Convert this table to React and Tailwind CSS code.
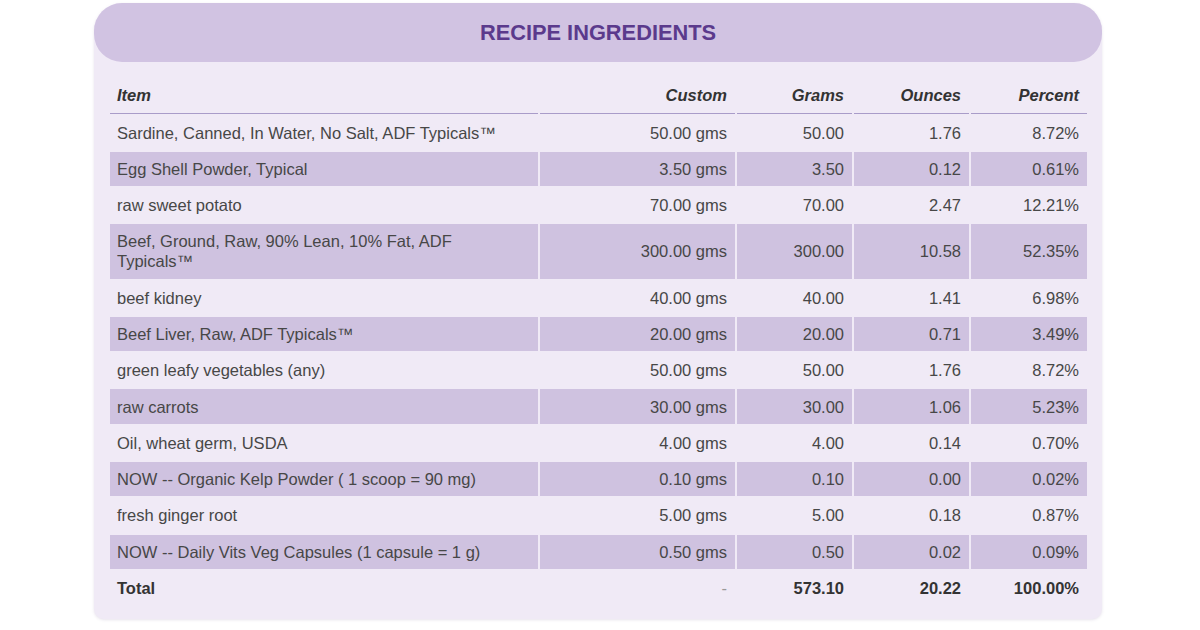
import React from 'react';

const rows = [
    ['Sardine, Canned, In Water, No Salt, ADF Typicals™', '50.00 gms', '50.00', '1.76', '8.72%'],
    ['Egg Shell Powder, Typical', '3.50 gms', '3.50', '0.12', '0.61%'],
    ['raw sweet potato', '70.00 gms', '70.00', '2.47', '12.21%'],
    ['Beef, Ground, Raw, 90% Lean, 10% Fat, ADF Typicals™', '300.00 gms', '300.00', '10.58', '52.35%'],
    ['beef kidney', '40.00 gms', '40.00', '1.41', '6.98%'],
    ['Beef Liver, Raw, ADF Typicals™', '20.00 gms', '20.00', '0.71', '3.49%'],
    ['green leafy vegetables (any)', '50.00 gms', '50.00', '1.76', '8.72%'],
    ['raw carrots', '30.00 gms', '30.00', '1.06', '5.23%'],
    ['Oil, wheat germ, USDA', '4.00 gms', '4.00', '0.14', '0.70%'],
    ['NOW -- Organic Kelp Powder ( 1 scoop = 90 mg)', '0.10 gms', '0.10', '0.00', '0.02%'],
    ['fresh ginger root', '5.00 gms', '5.00', '0.18', '0.87%'],
    ['NOW -- Daily Vits Veg Capsules (1 capsule = 1 g)', '0.50 gms', '0.50', '0.02', '0.09%'],
];

const headers = ['Item', 'Custom', 'Grams', 'Ounces', 'Percent'];

const App = () => {
    return (
        <div className="w-[1200px] h-[630px] bg-white pt-[3px] pl-[94px]" style={{ fontFamily: '"Liberation Sans", Arial, sans-serif' }}>
            <div className="w-[1008px] bg-[#f0eaf6] rounded-b-[10px] rounded-t-[28px] shadow-[0_1px_3px_rgba(120,100,150,0.18)] pb-[12px]">
                <div className="h-[59px] pt-[2px] bg-[#d1c3e2] rounded-[28px] flex items-center justify-center">
                    <h1 className="text-[21.8px] font-bold text-[#5b3a8c]">RECIPE INGREDIENTS</h1>
                </div>

                <table className="table-fixed border-separate border-spacing-[2px] w-[981px] ml-[14px] mt-[13.5px] text-[16.5px] leading-[20px] text-[#474747]">
                    <colgroup>
                        <col className="w-[428px]" />
                        <col className="w-[195px]" />
                        <col className="w-[115px]" />
                        <col className="w-[115px]" />
                        <col className="w-[116px]" />
                    </colgroup>
                    <thead>
                        <tr>
                            {headers.map((h, i) => (
                                <th
                                    key={h}
                                    className={`pt-[7.5px] pb-[7.5px] font-bold italic text-[#333] border-b border-[#a99cc9] ${i === 0 ? 'text-left pl-[7px]' : 'text-right pr-[8px]'}`}
                                >
                                    {h}
                                </th>
                            ))}
                        </tr>
                    </thead>
                    <tbody>
                        {rows.map((r, idx) => (
                            <tr key={idx} className={idx % 2 === 1 ? 'bg-[#cfc2e0]' : ''}>
                                {r.map((c, i) => (
                                    <td
                                        key={i}
                                        className={`py-[7.15px] ${i === 0 ? 'text-left pl-[7px] pr-[40px]' : 'text-right pr-[8px]'}`}
                                    >
                                        {c}
                                    </td>
                                ))}
                            </tr>
                        ))}
                        <tr className="font-bold text-[#333]">
                            <td className="py-[7.15px] pl-[7px]">Total</td>
                            <td className="py-[7.15px] pr-[8px] text-right font-normal text-[#999]">-</td>
                            <td className="py-[7.15px] pr-[8px] text-right">573.10</td>
                            <td className="py-[7.15px] pr-[8px] text-right">20.22</td>
                            <td className="py-[7.15px] pr-[8px] text-right">100.00%</td>
                        </tr>
                    </tbody>
                </table>
            </div>
        </div>
    );
};

export default App;
